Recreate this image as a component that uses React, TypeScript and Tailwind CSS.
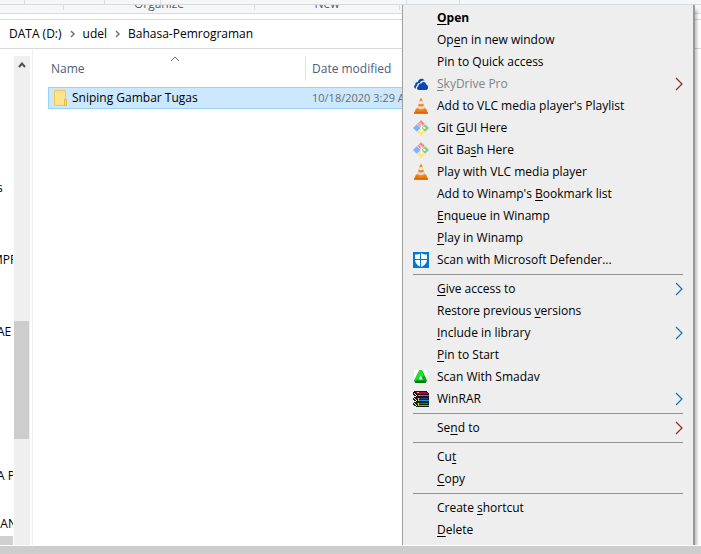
import type { ReactNode } from "react";

function CloudIcon() {
  return (
    <svg width="16" height="16" viewBox="0 0 16 16" aria-hidden="true">
      <path d="M2.600 12.500C.8 12.200.5 9.700 2.200 8.800 1.900 6.700 3.700 5.600 5 6 5 2.900 9.800 1.300 11.600 4.700 9.500 4.200 7.700 5 7 6.900 5 6.800 3.800 8.200 4 9.700 2.900 10.400 2.500 11.500 3.200 12.500Z" fill="#0a47b0" />
      <path d="M5.800 14C3.700 13.900 3.400 11 5.400 10.300 5.300 8.100 7 7.300 8.200 7.700 9.200 5.300 12.700 5.600 13.100 8.500 15.700 8.700 15.700 13.700 13.200 14Z" fill="#0a47b0" />
    </svg>
  );
}

function ConeIcon() {
  return (
    <svg width="16" height="16" viewBox="0 0 16 16" aria-hidden="true">
      <path d="M3 10.500H13L15 15.500H1Z" fill="#f07800" />
      <path d="M1 14.300H15V15.700H1Z" fill="#d85c00" />
      <path d="M7.200.5H8.800L12 11.500C10.500 13.300 5.500 13.300 4 11.500Z" fill="#f58a12" />
      <path d="M6.500 3H9.500L10.200 5.600C9 6.400 7 6.400 5.800 5.600Z" fill="#e8e8e8" />
      <path d="M5.200 7.700C6.700 8.700 9.300 8.700 10.800 7.700L11.500 10.100C9.800 11.600 6.200 11.600 4.500 10.100Z" fill="#dedede" />
    </svg>
  );
}

function GitIcon() {
  return (
    <svg width="16" height="16" viewBox="0 0 16 16" aria-hidden="true">
      <path d="M8 0L11.800 3.800 8 7.500 4.400 3.900Z" fill="#f58a8a" />
      <path d="M12.200 4.200L16 8 12.200 11.800 8.500 8Z" fill="#80d080" />
      <path d="M3.800 4.200L7.500 8 3.800 11.800 0 8Z" fill="#80b3ff" />
      <path d="M8 8.500L11.800 12.200 8 16 4.200 12.200Z" fill="#ffe680" />
      <path d="M6 2.500L8.500 5V11M8.500 5.500L11 8" fill="none" stroke="#fff" strokeWidth="1" />
      <circle cx="8.500" cy="5.500" r="1" fill="#fff" />
      <circle cx="11.500" cy="8" r="1" fill="#fff" />
      <circle cx="8.500" cy="11" r="1" fill="#fff" />
    </svg>
  );
}

function DefenderIcon() {
  return (
    <svg width="16" height="16" viewBox="0 0 16 16" aria-hidden="true">
      <path d="M0 0H16V16H0Z" fill="#0078d7" />
      <path d="M8 1C9.500 2.200 11.500 2.500 14 2.500V7.500C14 11 11.500 13.500 8 15 4.500 13.500 2 11 2 7.500V2.500C4.500 2.500 6.500 2.200 8 1Z" fill="#fff" />
      <path d="M7.500 1V15.500M1.500 7.500H14.500" stroke="#0078d7" />
    </svg>
  );
}

function SmadavIcon() {
  return (
    <svg width="16" height="16" viewBox="0 0 16 16" aria-hidden="true">
      <path d="M1 1H14V14H1Z" fill="#fff" />
      <path d="M6.500 1H9L14 11.500 12.500 14H2.500L1 11.500Z" fill="#00a814" />
      <path d="M6.500 1H8.500L11 7 5 10 2 12 1.500 11.500Z" fill="#14e82c" />
      <path d="M1.500 12H13.500L12.500 14H2.500Z" fill="#087018" />
      <path d="M7.700 6.500L9.800 10.500H5.600Z" fill="#fff" />
    </svg>
  );
}

function BooksIcon() {
  return (
    <svg width="16" height="16" viewBox="0 0 16 16" shapeRendering="crispEdges" aria-hidden="true">
      <path d="M0 1L1 0H13L16 3V6H4L0 4Z" fill="#300818" />
      <path d="M2 1H13L15 3H4Z" fill="#a00858" />
      <path d="M5 4H16V5H5Z" fill="#d84888" />
      <path d="M1 2L4 4V5L1 3Z" fill="#f0f0f0" />
      <path d="M0 7L2 6H16V11H4L0 9Z" fill="#081838" />
      <path d="M4 7H15V8H4Z" fill="#0c50a0" />
      <path d="M5 9H16V10H5Z" fill="#2890d8" />
      <path d="M1 7L4 9V10L1 8Z" fill="#f0f0f0" />
      <path d="M0 12L2 11H16V16H4L0 14Z" fill="#082818" />
      <path d="M4 12H15V13H4Z" fill="#0a8848" />
      <path d="M5 14H16V15H5Z" fill="#38c070" />
      <path d="M1 12L4 14V15L1 13Z" fill="#f0f0f0" />
      <path d="M4 1H6V2H4ZM6 4H7V5H6ZM5 7H6V10H5ZM5 12H6V15H5Z" fill="#e8c828" />
    </svg>
  );
}

function FolderIcon() {
  return (
    <svg width="14" height="16" viewBox="0 0 14 16" aria-hidden="true">
      <path d="M.5.500H11.500V15.500H.5Z" fill="#ffe48f" stroke="#f0c850" />
      <path d="M10.500 9.500H12.500V15.500H10.500Z" fill="#ffe48f" stroke="#e8b830" />
    </svg>
  );
}

type Entry = {
  label: string;
  mnemonic?: number;
  icon?: ReactNode;
  arrow?: "red" | "blue";
  bold?: boolean;
  disabled?: boolean;
};

const groups: Entry[][] = [
  [
    { label: "Open", mnemonic: 0, bold: true },
    { label: "Open in new window", mnemonic: 2 },
    { label: "Pin to Quick access" },
    { label: "SkyDrive Pro", mnemonic: 0, icon: <CloudIcon />, arrow: "red", disabled: true },
    { label: "Add to VLC media player's Playlist", icon: <ConeIcon /> },
    { label: "Git GUI Here", mnemonic: 4, icon: <GitIcon /> },
    { label: "Git Bash Here", mnemonic: 6, icon: <GitIcon /> },
    { label: "Play with VLC media player", icon: <ConeIcon /> },
    { label: "Add to Winamp's Bookmark list", mnemonic: 16 },
    { label: "Enqueue in Winamp", mnemonic: 0 },
    { label: "Play in Winamp", mnemonic: 0 },
    { label: "Scan with Microsoft Defender...", icon: <DefenderIcon /> },
  ],
  [
    { label: "Give access to", mnemonic: 0, arrow: "blue" },
    { label: "Restore previous versions", mnemonic: 17 },
    { label: "Include in library", mnemonic: 0, arrow: "blue" },
    { label: "Pin to Start", mnemonic: 0 },
    { label: "Scan With Smadav", icon: <SmadavIcon /> },
    { label: "WinRAR", icon: <BooksIcon />, arrow: "blue" },
  ],
  [{ label: "Send to", mnemonic: 2, arrow: "red" }],
  [
    { label: "Cut", mnemonic: 2 },
    { label: "Copy", mnemonic: 0 },
  ],
  [
    { label: "Create shortcut", mnemonic: 7 },
    { label: "Delete", mnemonic: 0 },
  ],
];

function MenuLabel({ label, mnemonic }: { label: string; mnemonic?: number }) {
  if (mnemonic === undefined) return <>{label}</>;
  return (
    <>
      {label.slice(0, mnemonic)}
      <span className="underline decoration-1 underline-offset-2">{label[mnemonic]}</span>
      {label.slice(mnemonic + 1)}
    </>
  );
}

function MenuItem({ item }: { item: Entry }) {
  return (
    <button
      type="button"
      role="menuitem"
      disabled={item.disabled}
      className={`flex h-[22px] w-full items-center gap-2 text-left whitespace-nowrap ${
        item.bold ? "font-bold" : ""
      } ${item.disabled ? "text-[#838383]" : "text-black"}`}
    >
      <span className="size-4 shrink-0">{item.icon}</span>
      <span className="flex-1">
        <MenuLabel label={item.label} mnemonic={item.mnemonic} />
      </span>
      {item.arrow && (
        <svg width="8" height="14" viewBox="0 0 8 14" aria-hidden="true">
          <path
            d="M1 1L7 7L1 13"
            fill="none"
            stroke={item.arrow === "red" ? "#8c2a2a" : "#1a6fb0"}
            strokeWidth="1.200"
          />
        </svg>
      )}
    </button>
  );
}

function ContextMenu() {
  return (
    <div
      role="menu"
      className="absolute top-[5px] bottom-[9px] left-[402px] w-[293px] overflow-hidden border-r-2 border-l border-r-[#999] border-l-[#a0a0a0] bg-[#eee] pt-[2px] pr-[10px] pl-[10px] shadow-[2px_5px_3px_#00000040]"
    >
      {groups.map((group, i) => (
        <div key={i}>
          {i > 0 && <hr className="my-[3px] border-t border-[#919191]" />}
          {group.map((item) => (
            <MenuItem key={item.label} item={item} />
          ))}
        </div>
      ))}
    </div>
  );
}

function Crumb() {
  return (
    <svg width="5" height="8" viewBox="0 0 5 8" className="mx-2" aria-hidden="true">
      <path d="M1 1L4 4L1 7" fill="none" stroke="#707070" strokeWidth="1.500" />
    </svg>
  );
}

function Ribbon() {
  return (
    <div className="shrink-0 bg-[#f5f6f7] text-[#5a5a5a]">
      <div className="flex h-[5px] border-b border-[#dadbdc]">
        <div className="w-[25px] border-r border-[#dadbdc]" />
        <div className="w-20 border-r border-[#dadbdc]" />
        <div className="w-14 border-r border-[#dadbdc]" />
        <div className="w-[246px] border-r border-[#dadbdc]" />
        <div className="w-[53px] border-r border-[#dadbdc]" />
      </div>
      <div className="flex h-[9px] overflow-hidden border-b border-[#dadbdc]">
        <div className="h-[5px] w-16 border-r border-[#dadbdc]" />
        <div className="flex h-[5px] w-[191px] items-end justify-center border-r border-[#dadbdc] leading-3">
          Organize
        </div>
        <div className="flex h-[5px] w-[145px] items-end justify-center border-r border-[#dadbdc] leading-3">
          New
        </div>
      </div>
    </div>
  );
}

type TreeRow = { text: string; scrolled?: boolean };

const treeRows: TreeRow[] = [
  { text: "" },
  { text: "" },
  { text: "" },
  { text: "" },
  { text: "" },
  { text: "s" },
  { text: "" },
  { text: "" },
  { text: "MPR", scrolled: true },
  { text: "" },
  { text: "" },
  { text: "AE" },
  { text: "" },
  { text: "" },
  { text: "" },
  { text: "" },
  { text: "" },
  { text: "A P" },
  { text: "" },
  { text: "IAN" },
];

function Tree() {
  return (
    <nav className="mr-[15px] box-content flex w-8 shrink-0 border-r border-[#f0f0f0] pt-[7px]">
      <div className="flex w-[13px] flex-col overflow-hidden">
        {treeRows.map((row, i) => (
          <div key={i} className={`h-6 shrink-0 leading-6 whitespace-nowrap ${row.scrolled ? "-ml-2" : "-ml-[3px]"}`}>
            {row.text}
          </div>
        ))}
        <div className="flex-1 bg-[#d0d0d0]" />
      </div>
      <div className="ml-px flex w-4 flex-col items-center bg-[#efefef]">
        <svg width="8" height="6" viewBox="0 0 8 6" className="mt-[6px] shrink-0" aria-hidden="true">
          <path d="M1 5L4 1.500L7 5" fill="none" stroke="#505050" strokeWidth="2" />
        </svg>
        <div className="basis-[253px]" />
        <div className="mr-px w-[15px] basis-[118px] bg-[#cdcdcd]" />
      </div>
    </nav>
  );
}

export default function App() {
  return (
    <div className="relative flex h-screen flex-col overflow-hidden bg-white font-['Open_Sans','Noto_Sans',sans-serif] text-[12px] text-black">
      <Ribbon />
      <div className="mt-[5px] flex h-[30px] shrink-0 items-center border-y border-[#d9d9d9] pl-[9px]">
        <a href="#data">DATA (D:)</a>
        <Crumb />
        <a href="#udel">udel</a>
        <Crumb />
        <a href="#bahasa">Bahasa-Pemrograman</a>
      </div>
      <div className="flex min-h-0 flex-1">
        <Tree />
        <main className="min-w-0 flex-1 pr-10">
          <table className="w-full table-fixed border-separate border-spacing-0 pt-[7px]">
            <thead>
              <tr className="text-left text-[#4c607a]">
                <th className="relative h-[25px] w-[258px] border-r border-[#e5e5e5] p-0 pl-[3px] font-normal">
                  Name
                  <svg width="10" height="6" viewBox="0 0 10 6" className="absolute top-0 left-[122px]" aria-hidden="true">
                    <path d="M1 5L5 1L9 5" fill="none" stroke="#707070" />
                  </svg>
                </th>
                <th className="p-0 pl-[6px] font-normal">Date modified</th>
              </tr>
            </thead>
            <tbody>
              <tr>
                <td colSpan={2} className="h-[6px] p-0" />
              </tr>
              <tr>
                <td className="h-[22px] border-y border-l border-[#99d1ff] bg-[#cce8ff] p-0 pl-[5px]">
                  <div className="flex items-center gap-1">
                    <FolderIcon />
                    Sniping Gambar Tugas
                  </div>
                </td>
                <td className="border-y border-r border-[#99d1ff] bg-[#cce8ff] p-0 pl-[6px] text-[11px] text-[#6d6d6d]">
                  10/18/2020 3:29 AM
                </td>
              </tr>
            </tbody>
          </table>
        </main>
      </div>
      <div className="relative z-10 h-[9px] shrink-0 border-t border-white bg-[#cdcdcd]" />
      <ContextMenu />
    </div>
  );
}
